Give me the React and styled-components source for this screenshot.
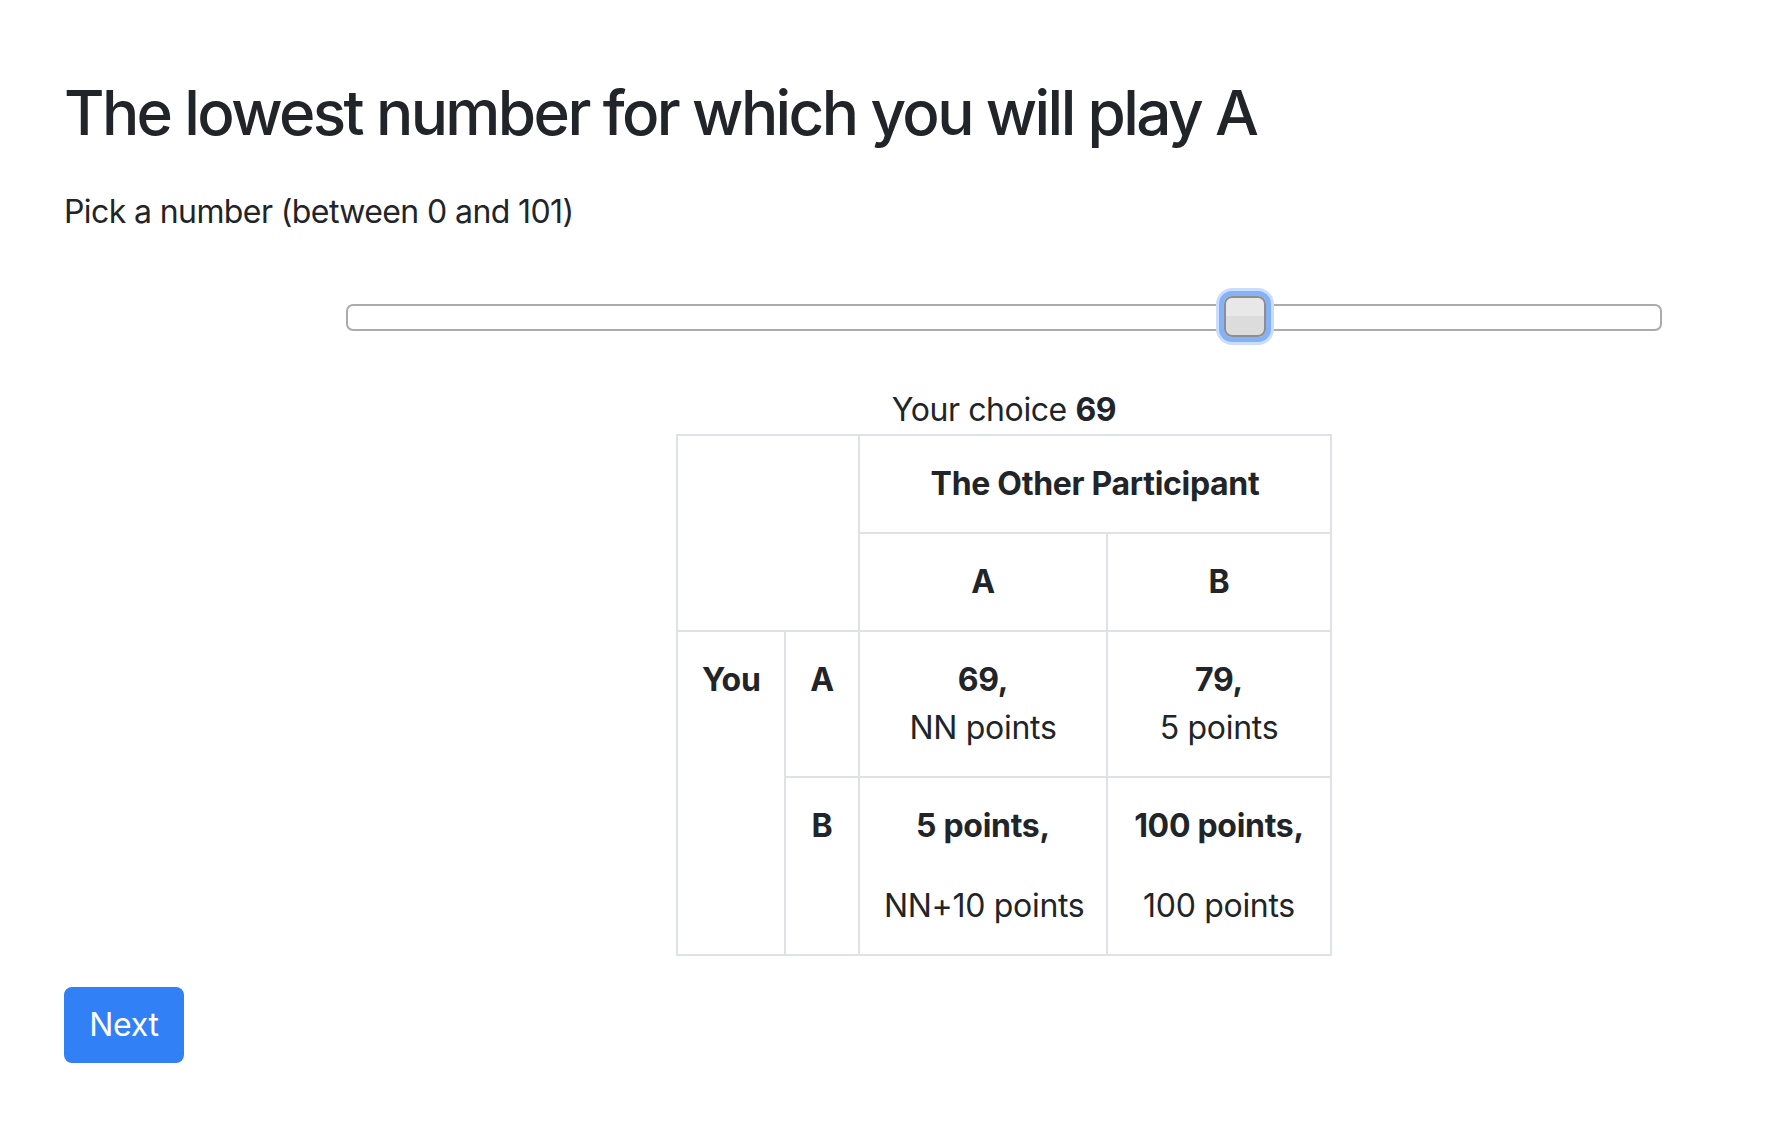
import styled, { createGlobalStyle } from 'styled-components';

const GlobalStyle = createGlobalStyle`
  body {
    margin: 0;
    background: #fff;
    color: #212529;
    font-family: Inter, "Noto Sans", "Liberation Sans", sans-serif;
  }
`;

const Page = styled.main`
  padding: 74px 64px 40px 64px;
`;

const Title = styled.h2`
  margin: 0 0 37px;
  font-size: 62px;
  font-weight: 500;
  line-height: 77px;
  letter-spacing: -2.6px;
`;

const Prompt = styled.p`
  margin: 0;
  font-size: 32px;
  line-height: 48px;
  letter-spacing: -0.6px;
`;

const ChoiceArea = styled.section`
  width: 1316px;
  margin-left: 282px;
`;

const Track = styled.div`
  position: relative;
  box-sizing: border-box;
  height: 27px;
  margin-top: 68px;
  border: 2px solid #ababab;
  border-radius: 7px;
  background: #fff;
`;

const Thumb = styled.div`
  position: absolute;
  top: -10px;
  box-sizing: border-box;
  width: 42px;
  height: 41px;
  border: 2px solid #8e8e8e;
  border-radius: 8px;
  background: linear-gradient(#e8e8e8 50%, #dcdcdc 50%);
  box-shadow: 0 0 0 5px #84b2f8, 0 0 0 8px #cadefc;
`;

const Caption = styled.p`
  margin: 55px 0 0;
  font-size: 32px;
  line-height: 48px;
  text-align: center;
  letter-spacing: -0.4px;
`;

const Matrix = styled.table`
  width: 656px;
  margin: 0 auto 31px;
  border-collapse: collapse;
  table-layout: fixed;
  font-size: 32px;
  line-height: 48px;
  letter-spacing: -0.3px;
`;

const Cell = styled.td`
  padding: 24px;
  border: 2px solid #dee2e6;
  vertical-align: top;
  text-align: center;
  font-weight: ${p => (p.$head ? 700 : 400)};
  white-space: nowrap;
`;

const Strong = styled.strong`
  display: block;
  font-weight: 700;
`;

const Second = styled.span`
  display: block;
  margin-top: ${p => p.$gap || 0}px;
`;

const NextButton = styled.button`
  display: block;
  width: 120px;
  height: 76px;
  padding: 0;
  border: 2px solid #3280f6;
  border-radius: 8px;
  background: #3280f6;
  color: #fff;
  font-family: inherit;
  font-size: 32px;
  line-height: 48px;
  letter-spacing: -0.3px;
  cursor: pointer;
`;

const payoffs = [
  { row: 'A', cells: [['69,', 'NN points'], ['79,', '5 points']], gap: 0 },
  { row: 'B', cells: [['5 points,', 'NN+10 points'], ['100 points,', '100 points']], gap: 32 },
];

const App = () => {
  const value = 69;
  const max = 100;
  const left = (value / max) * (1316 - 4 - 42);

  return (
    <Page>
      <GlobalStyle />
      <Title>The lowest number for which you will play A</Title>
      <Prompt>Pick a number (between 0 and 101)</Prompt>

      <ChoiceArea>
        <Track role="slider" aria-valuemin={0} aria-valuemax={101} aria-valuenow={value}>
          <Thumb style={{ left }} />
        </Track>

        <Caption>
          Your choice <strong>{value}</strong>
        </Caption>

        <Matrix>
          <colgroup>
            <col style={{ width: 108 }} />
            <col style={{ width: 74 }} />
            <col style={{ width: 248 }} />
            <col style={{ width: 224 }} />
          </colgroup>
          <tbody>
            <tr>
              <Cell colSpan={2} rowSpan={2} />
              <Cell as="th" $head colSpan={2}>The Other Participant</Cell>
            </tr>
            <tr>
              <Cell as="th" $head>A</Cell>
              <Cell as="th" $head>B</Cell>
            </tr>
            {payoffs.map((r, i) => (
              <tr key={r.row}>
                {i === 0 && <Cell as="th" $head rowSpan={2}>You</Cell>}
                <Cell as="th" $head>{r.row}</Cell>
                {r.cells.map(([a, b]) => (
                  <Cell key={a}>
                    <Strong>{a}</Strong>
                    <Second $gap={r.gap}>{b}</Second>
                  </Cell>
                ))}
              </tr>
            ))}
          </tbody>
        </Matrix>
      </ChoiceArea>

      <NextButton type="button">Next</NextButton>
    </Page>
  );
};

export default App;
